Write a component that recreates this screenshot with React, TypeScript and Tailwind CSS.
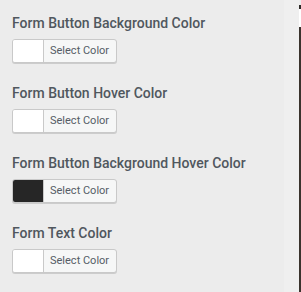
const fields = [
  { label: 'Form Button Background Color', color: '#ffffff' },
  { label: 'Form Button Hover Color', color: '#ffffff' },
  { label: 'Form Button Background Hover Color', color: '#262626' },
  { label: 'Form Text Color', color: '#ffffff' },
];

export default function App() {
  return (
    <div className="flex h-[292px] w-[301px] overflow-hidden bg-[#ececec] font-['Roboto',sans-serif]">
      <div className="w-[284px] shrink-0 px-3 pt-[14px]">
        {fields.map(({ label, color }) => (
          <div key={label} className="mb-[21px]">
            <h3 className="mb-[7px] text-[14px] font-medium leading-[18px] text-[#50575e]">{label}</h3>
            <button className="flex h-6 items-stretch overflow-hidden rounded-[3px] border border-[#c9c9c9] bg-[#f6f7f7] shadow-[0_1px_0_#ccc]">
              <span className="w-[31px] border-r border-[#c9c9c9]" style={{ backgroundColor: color }} />
              <span className="flex items-center pl-[6px] pr-[7px] text-[11px] text-[#555d66]">Select Color</span>
            </button>
          </div>
        ))}
      </div>
      <div className="w-[15px] shrink-0 bg-[#efefef]" />
      <div className="flex w-[2px] shrink-0 flex-col pt-[5px]">
        <div className="h-1 bg-[#2e2a27]" />
        <div className="h-[18px] bg-white" />
        <div className="flex-1 bg-[#3a332d]" />
      </div>
    </div>
  );
}
